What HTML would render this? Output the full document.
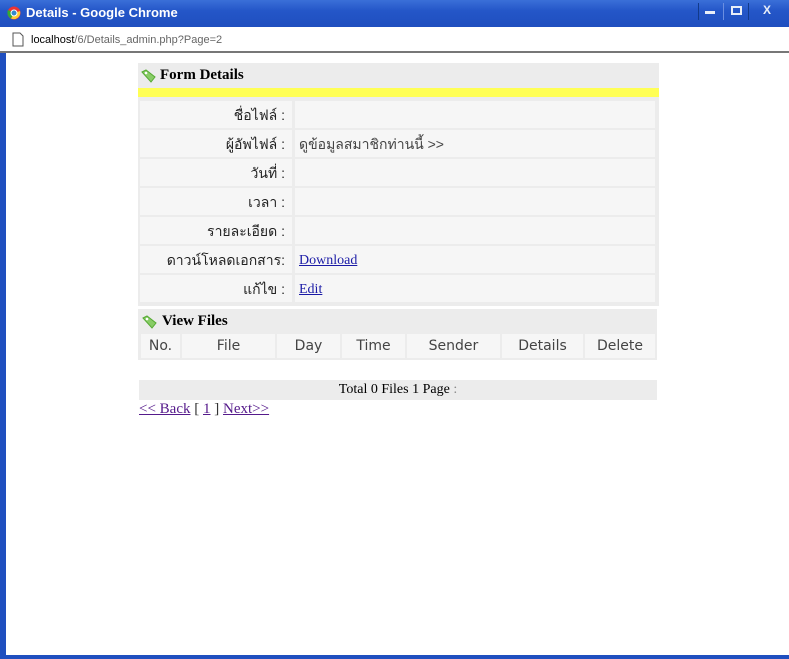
<!DOCTYPE html>
<html><head><meta charset="utf-8"><style>
body{margin:0;width:789px;height:659px;overflow:hidden;background:#fff;position:relative;font-family:"Liberation Serif",serif}
.abs{position:absolute}
.title{left:0;top:0;width:789px;height:27px;background:linear-gradient(#3a6fd8,#2456c8 40%,#1f4fbf);}
.title span{position:absolute;left:26px;top:5px;color:#fff;font:bold 13px "Liberation Sans",sans-serif}
.addr{left:0;top:27px;width:789px;height:26px;background:#fff;border-bottom:2px solid #777;box-sizing:border-box}
.lb{background:#1f4fbf}
.cell{position:absolute;background:#f6f6f6}
.lab{font:14px "Liberation Sans","Noto Sans CJK SC",sans-serif;color:#222;text-align:right}
.th{position:absolute;top:334px;height:24px;background:#f6f6f6;font:14px "DejaVu Sans",sans-serif;color:#444;text-align:center;line-height:24px}
a{color:#1a1aa6;text-decoration:underline}
</style></head><body>
<div class="abs title"><svg class="abs" style="left:7px;top:6px" width="14" height="14"><circle cx="7" cy="7" r="6.5" fill="#e33"/><path d="M7 7 L13 5 A6.5 6.5 0 0 1 4 12.5Z" fill="#fc3"/><path d="M7 7 L4 12.5 A6.5 6.5 0 0 1 1 4Z" fill="#3a3"/><circle cx="7" cy="7" r="3" fill="#38c" stroke="#fff"/></svg><span>Details - Google Chrome</span>
<div class="abs" style="left:698px;top:3px;width:24px;height:17px;border-left:1px solid #123a8a;border-right:1px solid #6a8ee0"></div>
<div class="abs" style="left:705px;top:11px;width:10px;height:3px;background:#e8eef8"></div>
<div class="abs" style="left:723px;top:3px;width:25px;height:17px;border-right:1px solid #123a8a"></div>
<div class="abs" style="left:731px;top:6px;width:7px;height:5px;border:2px solid #e8eef8"></div>
<div class="abs" style="left:763px;top:3px;color:#e8eef8;font:bold 12px 'Liberation Sans',sans-serif">X</div>
</div>
<div class="abs addr"><svg class="abs" style="left:12px;top:5px" width="12" height="15"><path d="M1 1H8L11 4V14H1Z" fill="#fff" stroke="#555"/></svg><span class="abs" style="left:31px;top:7px;font:11px 'Liberation Sans',sans-serif;color:#000">localhost<span style="color:#666">/6/Details_admin.php?Page=2</span></span></div>
<div class="abs lb" style="left:0;top:53px;width:6px;height:606px"></div>
<div class="abs lb" style="left:0;top:655px;width:789px;height:4px"></div>

<div class="abs" style="left:138px;top:63px;width:521px;height:243px;background:#ececec"></div>
<svg class="abs" style="left:141px;top:69px" width="16" height="14"><path d="M1 3 L5 1 L14 8 L10 13 Z" fill="#8c6" stroke="#5a3"/><circle cx="5" cy="4" r="1.3" fill="#fff"/></svg>
<div class="abs" style="left:160px;top:67px;font:bold 15px 'Liberation Serif',serif">Form Details</div>
<div class="abs" style="left:138px;top:88px;width:521px;height:9px;background:#ffff55"></div>
<div id="rows"></div>
<div class="abs" style="left:138px;top:309px;width:519px;height:51px;background:#ececec"></div>
<svg class="abs" style="left:142px;top:315px" width="16" height="14"><path d="M1 3 L5 1 L14 8 L10 13 Z" fill="#8c6" stroke="#5a3"/><circle cx="5" cy="4" r="1.3" fill="#fff"/></svg>
<div class="abs" style="left:162px;top:313px;font:bold 15px 'Liberation Serif',serif">View Files</div>
<div class="th" style="left:141px;width:39px">No.</div>
<div class="th" style="left:182px;width:93px">File</div>
<div class="th" style="left:277px;width:63px">Day</div>
<div class="th" style="left:342px;width:63px">Time</div>
<div class="th" style="left:407px;width:93px">Sender</div>
<div class="th" style="left:502px;width:81px">Details</div>
<div class="th" style="left:585px;width:70px">Delete</div>
<div class="abs" style="left:139px;top:380px;width:518px;height:20px;background:#ececec;text-align:center;font:14px 'Liberation Serif',serif;line-height:20px">Total 0 Files 1 Page <span style="color:#888">:</span></div>
<div class="abs" style="left:139px;top:401px;font:15px 'Liberation Serif',serif;color:#333"><a style="color:#551a8b">&lt;&lt; Back</a> [ <a style="color:#551a8b">1</a> ] <a style="color:#551a8b">Next&gt;&gt;</a></div>
<script>
var L=["ชื่อไฟล์ :","ผู้อัพไฟล์ :","วันที่ :","เวลา :","รายละเอียด :","ดาวน์โหลดเอกสาร:","แก้ไข :"];
var V=["",'<span style="font-family:Liberation Sans,Noto Sans CJK SC,sans-serif;color:#444">ดูข้อมูลสมาชิกท่านนี้ &gt;&gt;</span>','','','','<a style="font-size:14px">Download</a>','<a style="font-size:14px">Edit</a>'];
var h="";for(var i=0;i<7;i++){var t=101+i*29;
h+='<div class="cell lab" style="left:140px;top:'+t+'px;width:145px;height:27px;line-height:29px;padding-right:7px">'+L[i]+'</div>';
h+='<div class="cell" style="left:295px;top:'+t+'px;width:356px;height:27px;line-height:29px;padding-left:4px;font-size:14px">'+V[i]+'</div>';}
document.getElementById("rows").innerHTML=h;
</script>
</body></html>
